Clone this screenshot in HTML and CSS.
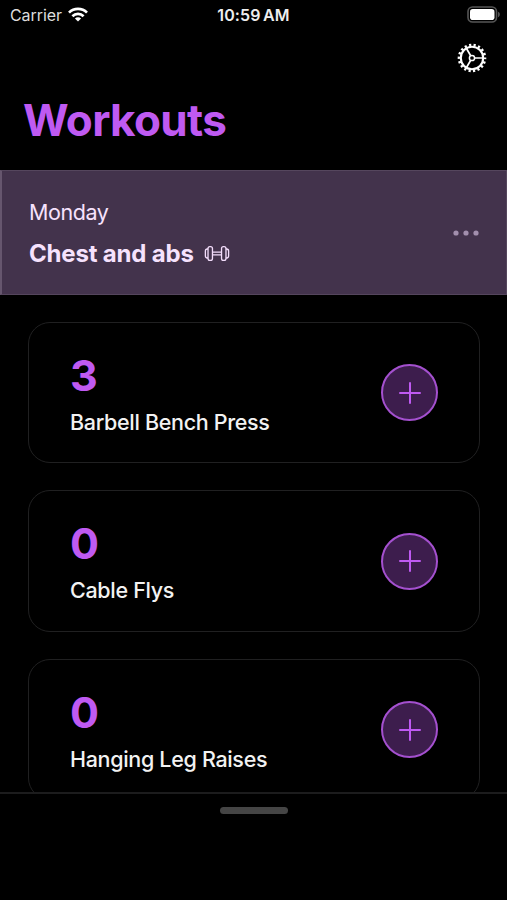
FILE: index.html
```html
<!DOCTYPE html>
<html lang="en">
<head>
<meta charset="utf-8">
<title>Workouts</title>
<link rel="stylesheet" href="styles.css">
</head>
<body>
<div class="app">
  <header class="status">
    <div class="carrier"><span class="carrier-name">Carrier</span>
      <svg class="wifi" width="20" height="15" viewBox="0 0 20 15" fill="none" stroke="#fff" stroke-width="2.7"><path d="M1 5.6a12.8 12.8 0 0 1 18 0"/><path d="M4.4 9.2a8 8 0 0 1 11.2 0"/><path d="M10 14.6 6.9 11.5a4.4 4.4 0 0 1 6.2 0z" fill="#fff" stroke="none"/></svg>
    </div>
    <span class="time">10:59 AM</span>
    <svg class="battery" width="34" height="17" viewBox="0 0 34 17"><rect x="1" y="1" width="28.5" height="15" rx="4.5" fill="none" stroke="#555" stroke-width="1.6"/><rect x="3" y="3" width="24.5" height="11" rx="2.8" fill="#fff"/><path d="M31.2 5.8c2 .8 2 4.6 0 5.4z" fill="#666"/></svg>
  </header>
  <div class="toolbar">
    <svg class="gear" width="30" height="30" viewBox="-15 -15 30 30" fill="none" stroke="#fff"><circle r="13" stroke-width="2.6" stroke-dasharray="2.2 2.338" stroke-dashoffset="1.1"/><circle r="11.2" stroke-width="2.1"/><circle r="2.6" stroke-width="1.5"/><path d="M2.9 0H11M-1.45-2.5-5.5-9.5M-1.45 2.5-5.5 9.5" stroke-width="1.7"/></svg>
  </div>
  <h1 class="title">Workouts</h1>
  <section class="day">
    <div class="plan">
      <div class="weekday">Monday</div>
      <div class="focus"><span class="focus-name">Chest and abs</span>
        <svg class="dumbbell" width="26" height="17" viewBox="0 0 27 18" fill="none" stroke="#f3ddfb" stroke-width="1.4"><rect x="4" y="1.8" width="4.7" height="14.4" rx="2"/><rect x="18.3" y="1.8" width="4.7" height="14.4" rx="2"/><path d="M4 4.2H3.2Q1.2 4.2 1.2 6.5V11.5Q1.2 13.8 3.2 13.8H4M23 4.2H23.8Q25.8 4.2 25.8 6.5V11.5Q25.8 13.8 23.8 13.8H23M8.7 7.5H18.3M8.7 10.5H18.3"/></svg>
      </div>
    </div>
    <svg class="more" width="26" height="6" viewBox="0 0 26 6" fill="#a28fad"><circle cx="3" cy="3" r="2.6"/><circle cx="13" cy="3" r="2.6"/><circle cx="23" cy="3" r="2.6"/></svg>
  </section>
  <main class="list">
    <article class="card"><div><div class="count">3</div><div class="name">Barbell Bench Press</div></div><button class="add" aria-label="Add"><svg width="22" height="22" viewBox="0 0 22 22" stroke="#bf5af2" stroke-width="2" stroke-linecap="round"><path d="M11 1V21M1 11H21"/></svg></button></article>
    <article class="card"><div><div class="count">0</div><div class="name">Cable Flys</div></div><button class="add" aria-label="Add"><svg width="22" height="22" viewBox="0 0 22 22" stroke="#bf5af2" stroke-width="2" stroke-linecap="round"><path d="M11 1V21M1 11H21"/></svg></button></article>
    <article class="card"><div><div class="count">0</div><div class="name">Hanging Leg Raises</div></div><button class="add" aria-label="Add"><svg width="22" height="22" viewBox="0 0 22 22" stroke="#bf5af2" stroke-width="2" stroke-linecap="round"><path d="M11 1V21M1 11H21"/></svg></button></article>
  </main>
  <footer class="sheet"><div class="grabber"></div></footer>
</div>
</body>
</html>
```
FILE: styles.css
```css
* { box-sizing: border-box; }
body { margin: 0; background: #000; color: #f2f2f2; font-family: Inter, "Liberation Sans", sans-serif; }
.app { height: 900px; display: flex; flex-direction: column; overflow: hidden; }
.status { height: 30px; flex: none; display: grid; grid-template-columns: 1fr auto 1fr; align-items: center; padding: 0 6px 0 6px; }
.carrier { display: flex; align-items: center; gap: 6px; padding-left: 4px; font-size: 16px; line-height: 20px; letter-spacing: -0.08px; color: #ddd; }
.wifi { margin-top: -2px; }
.time { font-size: 16px; font-weight: 600; line-height: 20px; letter-spacing: 0.1px; word-spacing: -1.5px; color: #eee; }
.battery { justify-self: end; margin-top: -1px; }
.toolbar { height: 56px; flex: none; display: flex; justify-content: flex-end; align-items: center; padding-right: 20px; }
.gear { display: block; }
.title { margin: 0; height: 84px; flex: none; padding: 7px 0 0 23px; font-size: 44px; font-weight: 700; line-height: 54px; letter-spacing: -0.65px; color: #bf5af2; }
.day { height: 125px; flex: none; display: flex; justify-content: space-between; align-items: center; padding: 0 27px; background: #43334c; border: 1px solid #55465d; border-left: 2px solid #66566e; color: #f6e2fd; }
.plan { padding-top: 1px; }
.weekday { font-size: 21.5px; line-height: 28px; letter-spacing: -0.45px; }
.focus { display: flex; align-items: center; gap: 10px; margin-top: 13px; font-size: 24px; font-weight: 700; line-height: 30px; letter-spacing: -0.18px; }
.list { flex: 1; min-height: 0; overflow: hidden; display: flex; flex-direction: column; gap: 27px; padding: 26.5px 27px 0 28px; }
.card { height: 141.5px; flex: none; display: flex; justify-content: space-between; align-items: center; border: 1.5px solid #202021; border-radius: 22px; padding: 1px 41px 0 41px; }
.count { font-size: 43px; font-weight: 700; line-height: 50px; color: #bf5af2; }
.name { font-size: 21.5px; font-weight: 500; line-height: 28px; margin-top: 8px; letter-spacing: -0.32px; white-space: nowrap; }
.add { width: 57px; height: 57px; padding: 0; display: grid; place-items: center; border: 2px solid #a450cf; border-radius: 50%; background: #3d1d4d; }
.sheet { height: 108px; flex: none; display: flex; justify-content: center; padding-top: 13px; border-top: 2px solid #1c1c1d; }
.grabber { width: 68px; height: 7px; border-radius: 4px; background: #454545; }
```
